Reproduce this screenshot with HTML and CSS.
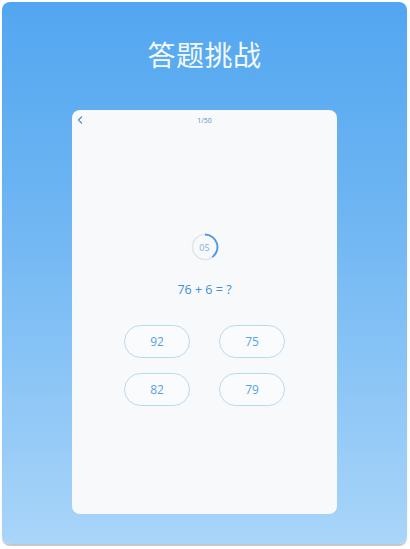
FILE: index.html
```html
<!DOCTYPE html>
<html lang="zh">
<head>
<meta charset="utf-8">
<link rel="stylesheet" href="styles.css">
</head>
<body>
<div class="frame">
  <h1 class="title">答题挑战</h1>
  <div class="card">
    <div class="header">
      <svg class="back" width="6" height="8" viewBox="0 0 6 8"><path d="M4.5 1 L1.5 4 L4.5 7" fill="none" stroke="#5c8fc2" stroke-width="1.3" stroke-linecap="round" stroke-linejoin="round"/></svg>
      <span class="progress">1/50</span>
    </div>
    <div class="timer">
      <svg width="28" height="28" viewBox="0 0 28 28">
        <circle cx="14" cy="14" r="12.5" fill="none" stroke="#e3e6ea" stroke-width="1.6"/>
        <path d="M14 1.5 A12.5 12.5 0 0 1 21.3 24.1" fill="none" stroke="#4a9be6" stroke-width="1.8"/>
      </svg>
      <span class="count">05</span>
    </div>
    <div class="question">76 + 6 = ?</div>
    <div class="answers">
      <button class="ans">92</button>
      <button class="ans">75</button>
      <button class="ans">82</button>
      <button class="ans">79</button>
    </div>
  </div>
</div>
</body>
</html>
```
FILE: styles.css
```css
html, body {
  margin: 0;
  padding: 0;
  background: #ffffff;
}
body {
  width: 410px;
  height: 549px;
  overflow: hidden;
  font-family: "Open Sans", "Noto Sans", "Noto Sans CJK SC", sans-serif;
}
.frame {
  margin: 2px 3px 0 2px;
  height: 542px;
  border-radius: 8px;
  background: linear-gradient(180deg, #52a6f0 0%, #6fb6f3 40%, #a9d5f9 100%);
  box-shadow: 0 2px 1px #c6c6c6;
  display: flex;
  flex-direction: column;
  align-items: center;
}
.title {
  margin: 34px 0 0;
  font-family: "Noto Sans CJK SC", sans-serif;
  font-weight: 400;
  font-size: 28px;
  line-height: 36px;
  color: #f4f9ff;
  letter-spacing: 0.5px;
}
.card {
  margin-top: 38px;
  width: 265px;
  height: 404px;
  background: #f8f9fa;
  border-radius: 8px;
  display: flex;
  flex-direction: column;
  align-items: center;
}
.header {
  position: relative;
  width: 100%;
  height: 20px;
  display: flex;
  align-items: center;
  justify-content: center;
}
.back {
  position: absolute;
  left: 5px;
  top: 6px;
}
.progress {
  font-size: 7px;
  color: #5c8fc2;
}
.timer {
  margin-top: 103px;
  position: relative;
  width: 28px;
  height: 28px;
  display: flex;
  align-items: center;
  justify-content: center;
}
.timer svg {
  position: absolute;
  left: 0;
  top: 0;
}
.count {
  font-size: 9px;
  color: #7db0df;
}
.question {
  margin-top: 20px;
  font-size: 12.5px;
  line-height: 17px;
  color: #3d90dd;
}
.answers {
  margin-top: 27px;
  display: grid;
  grid-template-columns: 66px 66px;
  column-gap: 29px;
  row-gap: 15px;
}
.ans {
  width: 66px;
  height: 33px;
  border: 1px solid #b9d9f1;
  border-radius: 17px;
  background: #f9fbfd;
  color: #5aa2e2;
  font-family: "Open Sans", "Noto Sans", sans-serif;
  font-size: 12px;
  padding: 0;
}
```
